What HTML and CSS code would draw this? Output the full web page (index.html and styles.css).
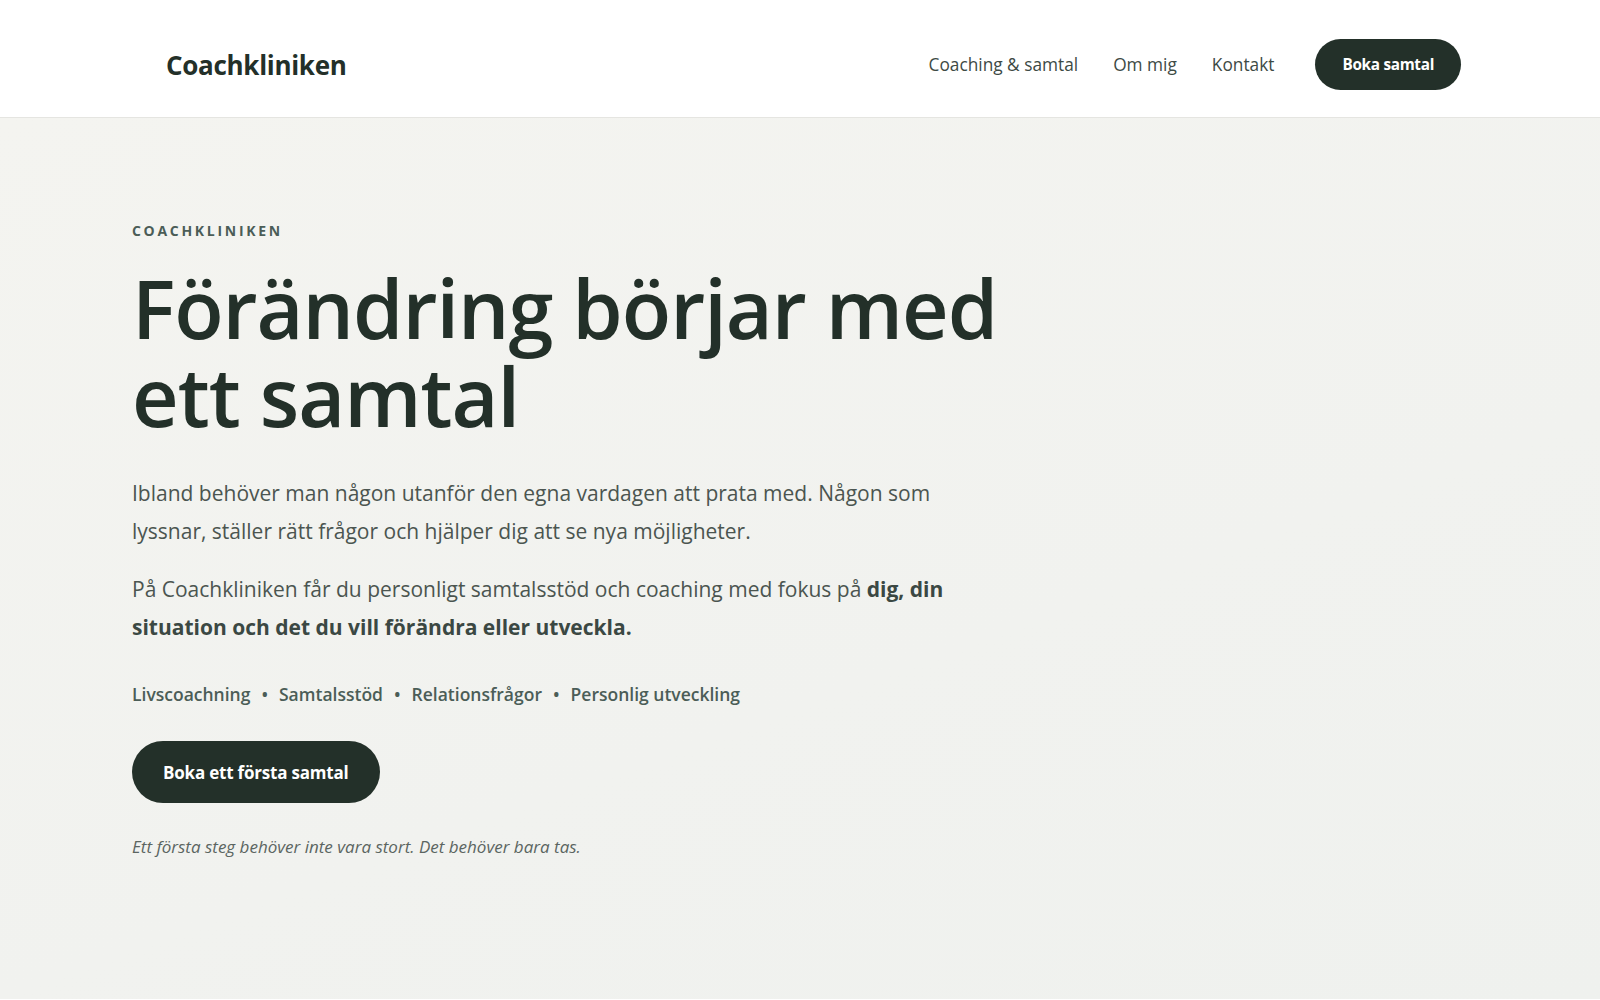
FILE: index.html
```html
<!DOCTYPE html>
<html lang="sv">
<head>
    <meta charset="UTF-8">
    <meta name="viewport" content="width=device-width, initial-scale=1.0">
    <title>Coachkliniken</title>
    <link rel="stylesheet" href="styles.css">
</head>
<body>
    <header class="site-header">
        <div class="header-inner">
            <a class="logo" href="#">Coachkliniken</a>
            <nav class="nav">
                <a href="#">Coaching &amp; samtal</a>
                <a href="#">Om mig</a>
                <a href="#">Kontakt</a>
                <a class="btn btn-small" href="#">Boka samtal</a>
            </nav>
        </div>
    </header>

    <main class="hero">
        <div class="hero-inner">
            <p class="eyebrow">Coachkliniken</p>
            <h1>Förändring börjar med ett samtal</h1>
            <p class="lead">Ibland behöver man någon utanför den egna vardagen att prata med. Någon som lyssnar, ställer rätt frågor och hjälper dig att se nya möjligheter.</p>
            <p class="lead">På Coachkliniken får du personligt samtalsstöd och coaching med fokus på <strong>dig, din situation och det du vill förändra eller utveckla.</strong></p>
            <ul class="tags">
                <li>Livscoachning</li>
                <li>Samtalsstöd</li>
                <li>Relationsfrågor</li>
                <li>Personlig utveckling</li>
            </ul>
            <a class="btn btn-large" href="#">Boka ett första samtal</a>
            <p class="note">Ett första steg behöver inte vara stort. Det behöver bara tas.</p>
        </div>
    </main>
</body>
</html>
```

FILE: styles.css
```css
* {
    box-sizing: border-box;
}

body {
    margin: 0;
    font-family: "Open Sans", "Noto Sans", sans-serif;
    color: #233029;
    background: #fff;
}

a {
    text-decoration: none;
    color: inherit;
}

.site-header {
    background: #fff;
    border-bottom: 1px solid #e5e5e1;
}

.header-inner {
    padding: 39px 139px 27px 166px;
    display: flex;
    justify-content: space-between;
    align-items: center;
}

.logo {
    font-size: 26px;
    font-weight: 700;
    letter-spacing: -0.3px;
    color: #233029;
}

.nav {
    display: flex;
    align-items: center;
    gap: 35px;
}

.nav a {
    font-size: 17.3px;
    color: #3d4a45;
}

.btn {
    display: inline-block;
    background: #233029;
    color: #fff !important;
    font-weight: 700;
    border-radius: 999px;
}

.nav .btn-small {
    margin-left: 6px;
    padding: 14px 27px;
    font-size: 15.3px;
    letter-spacing: -0.3px;
    line-height: 23px;
}

.hero {
    min-height: 881px;
    background: linear-gradient(160deg, #f4f4f0 0%, #f1f2ef 60%, #eff1ee 100%);
}

.hero-inner {
    padding: 103px 0 0 132px;
}

.eyebrow {
    margin: 0 0 24px;
    font-size: 14px;
    font-weight: 700;
    letter-spacing: 2.7px;
    text-transform: uppercase;
    color: #4b5d57;
}

h1 {
    margin: 0 0 34px;
    max-width: 960px;
    font-size: 81px;
    font-weight: 600;
    line-height: 88px;
    letter-spacing: -1px;
    color: #233029;
}

.lead {
    margin: 0 0 20px;
    max-width: 830px;
    font-size: 21px;
    line-height: 38px;
    color: #4b5550;
}

.lead strong {
    color: #3b4843;
}

.tags {
    list-style: none;
    margin: 36px 0 35px;
    padding: 0;
    display: flex;
    font-size: 17.5px;
    font-weight: 600;
    color: #4b5d57;
}

.tags li + li::before {
    content: "•";
    margin: 0 11px;
}

.btn-large {
    padding: 20px 31px 19px;
    font-size: 17px;
    letter-spacing: -0.2px;
}

.note {
    margin: 32px 0 0;
    font-size: 17px;
    font-style: italic;
    color: #5b6561;
}
```
